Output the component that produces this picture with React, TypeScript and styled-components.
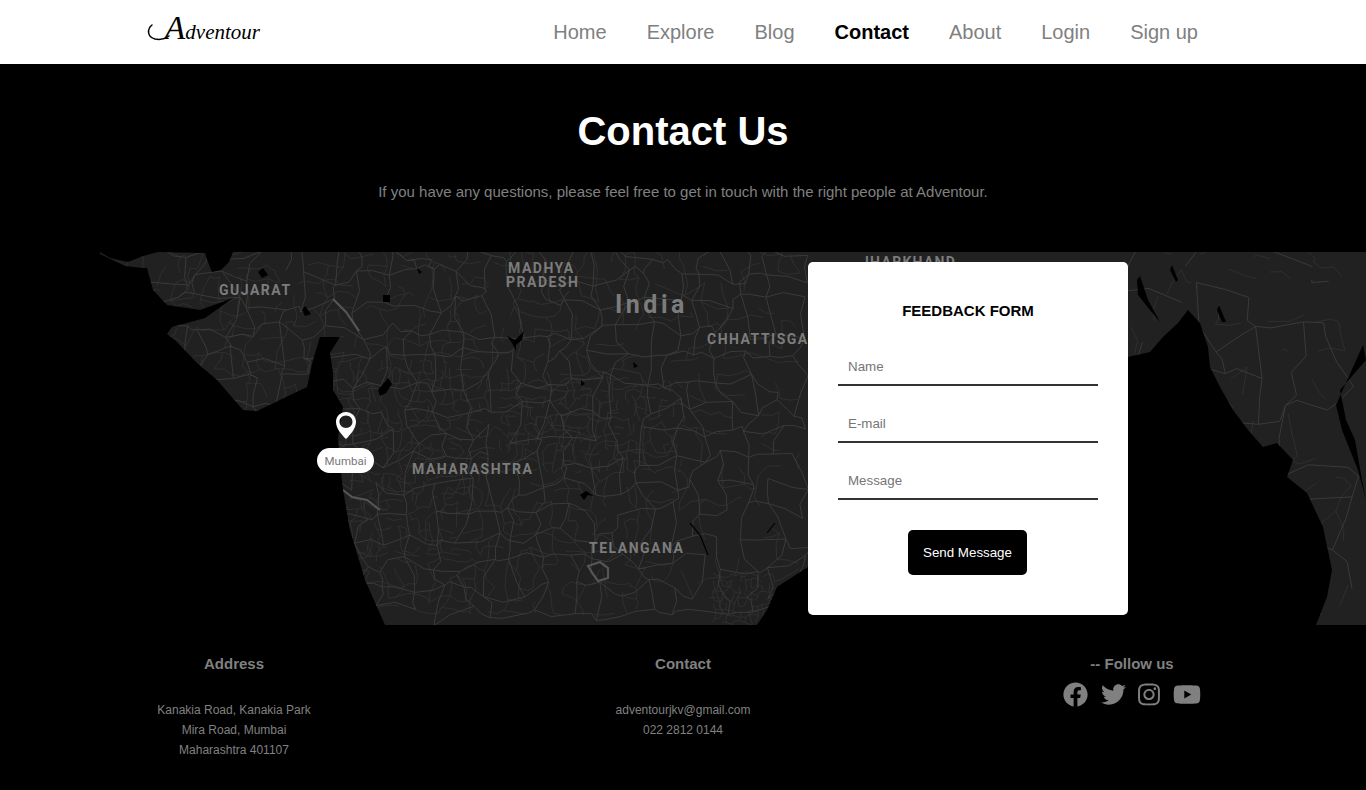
import styled, { createGlobalStyle } from "styled-components";
import { FaFacebook, FaInstagram, FaTwitter, FaYoutube } from "react-icons/fa";

const GlobalStyle = createGlobalStyle`
  * {
    box-sizing: border-box;
  }

  body {
    margin: 0;
    background: #000;
    font-family: "Liberation Sans", Arial, sans-serif;
  }
`;

const Page = styled.div`
  width: 100%;
  height: 790px;
  overflow: hidden;
  background: #000;
`;

const Header = styled.header`
  height: 64px;
  padding: 0 168px 0 146px;
  display: flex;
  align-items: center;
  justify-content: space-between;
  background: #fff;
`;

const Logo = styled.a`
  position: relative;
  display: block;
  width: 114px;
  height: 32px;
  color: #000;
  font-family: "Liberation Serif", serif;
  font-style: italic;
  font-size: 21px;
  line-height: 32px;
  text-align: right;
  white-space: nowrap;

  svg {
    position: absolute;
    left: 0;
    top: 0;
  }
`;

const LogoInitial = styled.span`
  font-size: 34px;
  line-height: 20px;
`;

const Nav = styled.nav`
  display: flex;
  gap: 40px;
`;

const NavLink = styled.a<{ $active?: boolean }>`
  font-size: 20px;
  line-height: 23px;
  font-weight: ${(p) => (p.$active ? 700 : 400)};
  color: ${(p) => (p.$active ? "#000" : "#808080")};
`;

const Intro = styled.section`
  height: 188px;
  padding-top: 42px;
  text-align: center;
`;

const Title = styled.h1`
  margin: 0;
  font-size: 40px;
  line-height: 50px;
  font-weight: 700;
  color: #fff;
`;

const Lead = styled.p`
  margin: 26px 0 0;
  font-size: 15px;
  line-height: 20px;
  color: #808080;
`;

const MapSection = styled.section`
  position: relative;
  height: 373px;
  margin-left: 100px;
  padding: 10px 238px 10px 0;
  display: flex;
  justify-content: flex-end;
`;

const MapDrawing = styled.svg`
  position: absolute;
  left: 0;
  top: 0;
  width: 1266px;
  height: 373px;
`;

const MapText = styled.text<{ $size: number; $spacing: number }>`
  font-family: Roboto, sans-serif;
  font-weight: 700;
  font-size: ${(p) => p.$size}px;
  letter-spacing: ${(p) => p.$spacing}px;
  fill: #7c7c7c;
`;

const PinLabel = styled.div`
  position: absolute;
  left: 217px;
  top: 196px;
  width: 57px;
  height: 25px;
  border-radius: 13px;
  background: #fff;
  color: #777;
  font-family: Roboto, sans-serif;
  font-size: 11.5px;
  line-height: 26px;
  text-align: center;
`;

const FormCard = styled.form`
  position: relative;
  width: 320px;
  height: 353px;
  padding: 39px 30px 0;
  display: flex;
  flex-direction: column;
  background: #fff;
  border-radius: 5px;
`;

const FormTitle = styled.h3`
  margin: 0 0 25px;
  font-size: 15px;
  line-height: 20px;
  font-weight: 700;
  text-align: center;
  color: #000;
`;

const Field = styled.input`
  display: block;
  width: 100%;
  height: 40px;
  margin-bottom: 17px;
  padding: 2px 10px 0;
  border: 0;
  border-bottom: 2px solid #333;
  outline: 0;
  background: transparent;
  font-family: "Liberation Sans", Arial, sans-serif;
  font-size: 13.333px;

  &::placeholder {
    color: #757575;
    opacity: 1;
  }
`;

const SendButton = styled.button`
  align-self: center;
  width: 119px;
  height: 45px;
  margin: 13px 1px 0 0;
  padding: 0;
  border: 0;
  border-radius: 5px;
  background: #000;
  color: #fff;
  font-family: "Liberation Sans", Arial, sans-serif;
  font-size: 13.333px;
`;

const Footer = styled.footer`
  display: grid;
  grid-template-columns: repeat(3, 449px);
  justify-content: center;
  padding-top: 30px;
  text-align: center;
  color: #808080;
`;

const FooterColumn = styled.div``;

const FooterHeading = styled.h4`
  margin: 0 0 28px;
  font-size: 15px;
  line-height: 17px;
  font-weight: 700;
`;

const FollowHeading = styled(FooterHeading)`
  margin-bottom: 10px;
`;

const FooterLine = styled.p`
  margin: 0;
  font-size: 12px;
  line-height: 20px;
`;

const Socials = styled.div`
  display: flex;
  justify-content: center;
  align-items: center;
  gap: 12.5px;
  color: #808080;
`;

const SocialIcon = styled.a<{ $width: number }>`
  display: block;
  height: 25px;

  svg {
    display: block;
    width: ${(p) => p.$width}px;
    height: 25px;
  }
`;

// seeded so the map comes out the same on every load
let seed = 7331;
const rnd = () => {
  seed = (seed * 16807) % 2147483647;
  return seed / 2147483647;
};

const wiggleEdge = (a: number[], b: number[], amount: number) => {
  const mx = (a[0] + b[0]) / 2 + (rnd() - 0.5) * amount;
  const my = (a[1] + b[1]) / 2 + (rnd() - 0.5) * amount;
  return `M${a[0].toFixed(1)} ${a[1].toFixed(1)}L${mx.toFixed(1)} ${my.toFixed(1)}L${b[0].toFixed(1)} ${b[1].toFixed(1)}`;
};

const meshRoads = (
  x0: number,
  y0: number,
  x1: number,
  y1: number,
  step: number,
  keep: number,
) => {
  const rows: number[][][] = [];
  for (let y = y0; y <= y1; y += step) {
    const row: number[][] = [];
    for (let x = x0; x <= x1; x += step) {
      row.push([x + (rnd() - 0.5) * step * 0.8, y + (rnd() - 0.5) * step * 0.8]);
    }
    rows.push(row);
  }
  let d = "";
  rows.forEach((row, r) =>
    row.forEach((p, c) => {
      if (row[c + 1] && rnd() < keep) d += wiggleEdge(p, row[c + 1], step * 0.45);
      if (rows[r + 1] && rnd() < keep) d += wiggleEdge(p, rows[r + 1][c], step * 0.45);
    }),
  );
  return d;
};

const mainRoads =
  meshRoads(100, 252, 810, 625, 26, 0.82) +
  meshRoads(1128, 252, 1366, 625, 42, 0.62);

const minorRoads =
  meshRoads(100, 252, 650, 625, 15, 0.5) +
  meshRoads(650, 252, 810, 625, 18, 0.3) +
  meshRoads(500, 380, 680, 470, 9, 0.45) +
  meshRoads(330, 360, 480, 560, 10, 0.35) +
  meshRoads(715, 575, 780, 625, 6, 0.65) +
  meshRoads(1128, 252, 1366, 625, 24, 0.3);

const LAND =
  "M1366 252L233 252L229 262L221 270L212 272L208 262L205 253L158 252L143 256L128 262L110 258L100 252L100 254" +
  "L125 266L143 268L147 268L153 290L167 305L200 310L233 298L205 318L172 327L167 334L175 340L197 363L217 380L243 410L257 411L307 387L313 360L320 337L340 337L330 353L333 373L333 390L343 407L338 437L340 463L343 490L350 530L365 580L385 625" +
  "L757 625L767 610L777 587L808 567L815 530L900 500L1128 357L1150 352L1163 337L1178 323L1188 310L1200 323L1208 347L1210 367L1220 387L1233 410L1248 430L1263 447L1277 443L1293 460L1287 477L1307 493L1323 527L1332 570L1327 597L1316 625L1366 625Z";

const WATER = [
  "M263 268L268 275L262 278L258 272Z",
  "M305 306L311 314L305 316L302 310Z",
  "M383 295L390 295L390 302L383 302Z",
  "M378 390L388 378L392 384L386 393L380 396Z",
  "M507 336L515 340L524 331L522 340L516 345L516 351L512 343Z",
  "M580 495L586 491L594 496L588 495L584 500Z",
  "M1140 276L1148 300L1160 322L1150 310L1138 295L1137 280Z",
  "M1172 265L1178 280L1176 282L1170 270Z",
  "M1219 305L1226 322L1222 322L1217 310Z",
  "M1363 345L1366 360L1340 390L1346 420L1355 440L1362 480L1366 500L1358 470L1342 430L1336 405Z",
  "M417 268L422 272L419 274Z",
  "M633 362L638 366L634 368Z",
  "M581 380L585 384L581 386Z",
  "M1186 420L1190 424L1188 427Z",
];

const App = () => {
  return (
    <Page>
      <GlobalStyle />
      <Header>
        <Logo>
          <svg width="30" height="32" viewBox="0 0 30 32" fill="none">
            <path
              d="M6 9C1 13 1 21 9 23C14 24 19 23 23 20"
              stroke="#000"
              strokeWidth="1.5"
              strokeLinecap="round"
            />
          </svg>
          <LogoInitial>A</LogoInitial>dventour
        </Logo>
        <Nav>
          <NavLink>Home</NavLink>
          <NavLink>Explore</NavLink>
          <NavLink>Blog</NavLink>
          <NavLink $active>Contact</NavLink>
          <NavLink>About</NavLink>
          <NavLink>Login</NavLink>
          <NavLink>Sign up</NavLink>
        </Nav>
      </Header>

      <Intro>
        <Title>Contact Us</Title>
        <Lead>
          If you have any questions, please feel free to get in touch with the
          right people at Adventour.
        </Lead>
      </Intro>

      <MapSection>
        <MapDrawing viewBox="100 252 1266 373">
          <defs>
            <clipPath id="land">
              <path d={LAND} />
            </clipPath>
          </defs>
          <rect x="100" y="252" width="1266" height="373" fill="#000" />
          <path d={LAND} fill="#212121" />
          <g clipPath="url(#land)" fill="none">
            <path d={minorRoads} stroke="#333" strokeWidth="0.8" />
            <path d={mainRoads} stroke="#3d3d3d" strokeWidth="0.9" />
            <path d="M333 299L346 312L359 331" stroke="#555" strokeWidth="2.2" />
            <path d="M343 490L352 497L367 500L380 510" stroke="#555" strokeWidth="2.2" />
            <path
              d="M588 566L600 562L608 568L608 578L598 581L593 574Z"
              stroke="#555"
              strokeWidth="2.2"
            />
          </g>
          {WATER.map((d) => (
            <path key={d} d={d} fill="#000" />
          ))}
          <path d="M690 523L700 535L708 555" stroke="#000" strokeWidth="1.2" fill="none" />
          <path d="M767 533L775 523" stroke="#000" strokeWidth="1.2" fill="none" />

          <MapText x="219" y="295" $size={14} $spacing={1.5}>GUJARAT</MapText>
          <MapText x="508" y="273" $size={14} $spacing={1.5}>MADHYA</MapText>
          <MapText x="506" y="287" $size={14} $spacing={1.5}>PRADESH</MapText>
          <MapText x="615" y="313" $size={25} $spacing={3.5}>India</MapText>
          <MapText x="707" y="344" $size={14} $spacing={1.5}>CHHATTISGARH</MapText>
          <MapText x="861" y="267" $size={14} $spacing={1.3}>JHARKHAND</MapText>
          <MapText x="412" y="474" $size={14} $spacing={1.5}>MAHARASHTRA</MapText>
          <MapText x="589" y="553" $size={14} $spacing={1.5}>TELANGANA</MapText>

          <path
            fillRule="evenodd"
            d="M346 412C340.5 412 336 416.300 336 421.700C336 428 341 434 346 439C351 434 356 428 356 421.700C356 416.300 351.500 412 346 412ZM346 415.500C349.600 415.500 352.500 418.300 352.500 421.800C352.500 425.300 349.600 428 346 428C342.400 428 339.500 425.300 339.500 421.800C339.500 418.300 342.400 415.500 346 415.500Z"
            fill="#fff"
          />
        </MapDrawing>
        <PinLabel>Mumbai</PinLabel>

        <FormCard>
          <FormTitle>FEEDBACK FORM</FormTitle>
          <Field placeholder="Name" />
          <Field placeholder="E-mail" />
          <Field placeholder="Message" />
          <SendButton type="button">Send Message</SendButton>
        </FormCard>
      </MapSection>

      <Footer>
        <FooterColumn>
          <FooterHeading>Address</FooterHeading>
          <FooterLine>Kanakia Road, Kanakia Park</FooterLine>
          <FooterLine>Mira Road, Mumbai</FooterLine>
          <FooterLine>Maharashtra 401107</FooterLine>
        </FooterColumn>
        <FooterColumn>
          <FooterHeading>Contact</FooterHeading>
          <FooterLine>adventourjkv@gmail.com</FooterLine>
          <FooterLine>022 2812 0144</FooterLine>
        </FooterColumn>
        <FooterColumn>
          <FollowHeading>-- Follow us</FollowHeading>
          <Socials>
            <SocialIcon $width={25}><FaFacebook /></SocialIcon>
            <SocialIcon $width={25}><FaTwitter /></SocialIcon>
            <SocialIcon $width={22}><FaInstagram /></SocialIcon>
            <SocialIcon $width={28}><FaYoutube /></SocialIcon>
          </Socials>
        </FooterColumn>
      </Footer>
    </Page>
  );
};

export default App;
